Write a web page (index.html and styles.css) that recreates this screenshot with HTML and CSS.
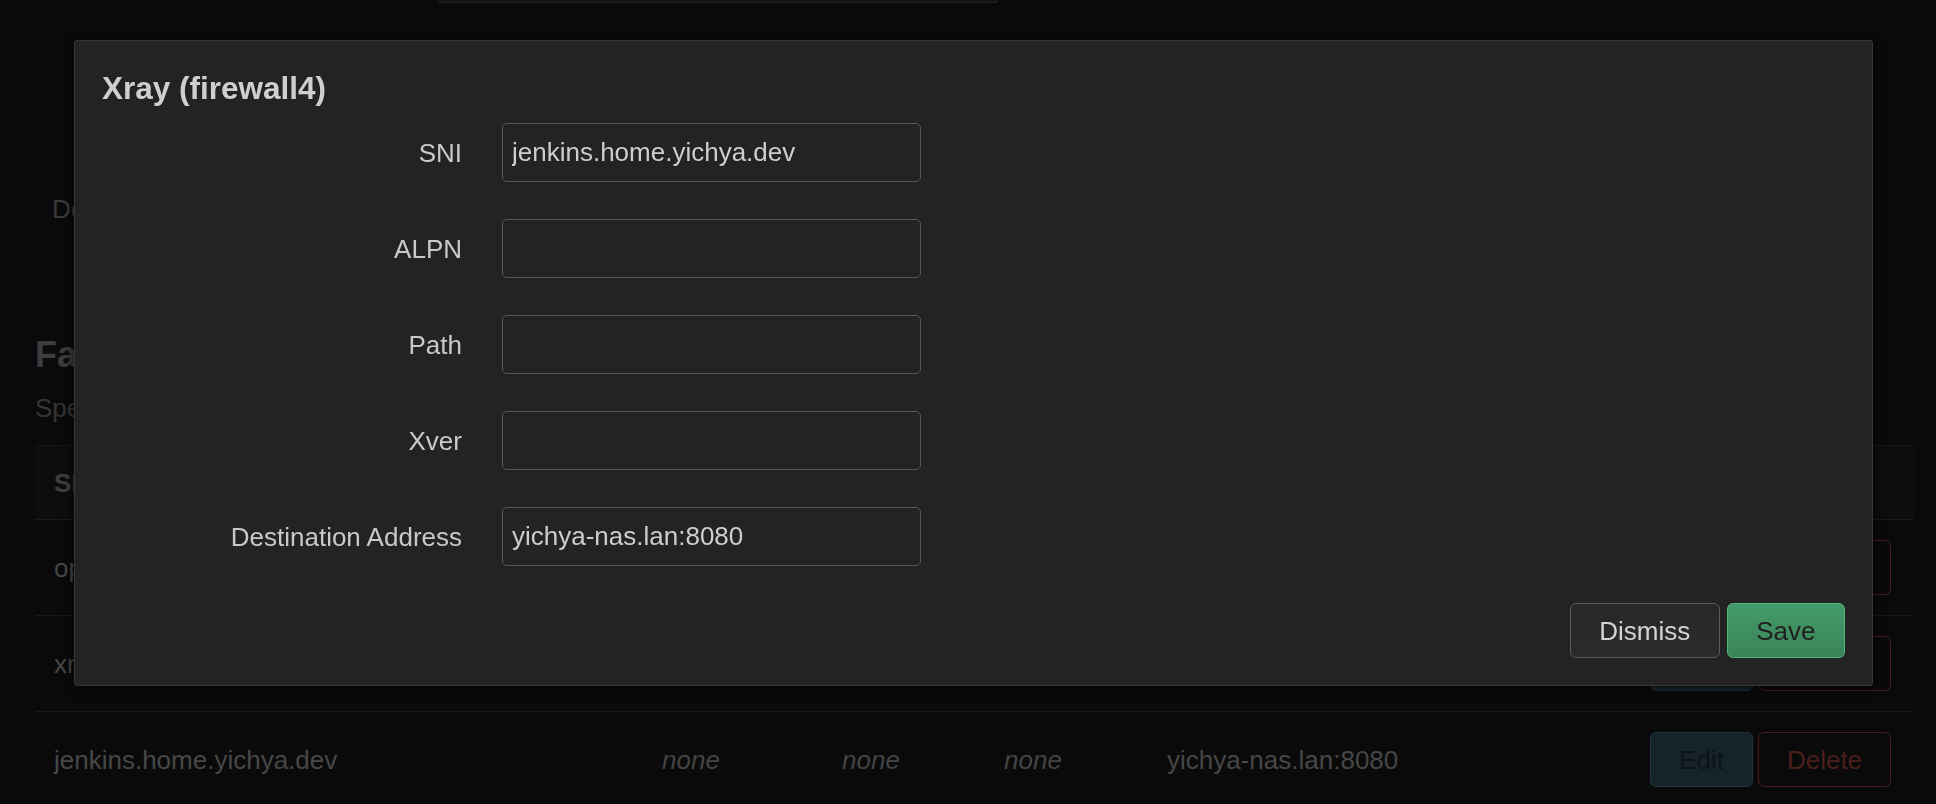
FILE: index.html
```html
<!DOCTYPE html>
<html lang="en">
<head>
<meta charset="utf-8">
<title>Xray (firewall4)</title>
<link rel="stylesheet" href="styles.css">
</head>
<body>
<div class="page">
  <div class="topstrip"></div>
  <div class="main">
    <div class="default-line">Default Fallback</div>
    <h3 class="section-title">Fallbacks</h3>
    <div class="section-desc">Specify fallback destinations for each SNI.</div>
    <div class="table">
      <div class="trow thead">
        <div class="cell">SNI</div>
        <div class="cell">ALPN</div>
        <div class="cell">Path</div>
        <div class="cell">Xver</div>
        <div class="cell">Destination Address</div>
        <div class="cell"></div>
      </div>
      <div class="trow">
        <div class="cell">openwrt.home.yichya.dev</div>
        <div class="cell em">none</div>
        <div class="cell em">none</div>
        <div class="cell em">none</div>
        <div class="cell">127.0.0.1:80</div>
        <div class="cell actions"><span class="btn-edit">Edit</span><span class="btn-del">Delete</span></div>
      </div>
      <div class="trow">
        <div class="cell">xray.home.yichya.dev</div>
        <div class="cell em">none</div>
        <div class="cell em">none</div>
        <div class="cell em">none</div>
        <div class="cell">127.0.0.1:8443</div>
        <div class="cell actions"><span class="btn-edit">Edit</span><span class="btn-del">Delete</span></div>
      </div>
      <div class="trow">
        <div class="cell">jenkins.home.yichya.dev</div>
        <div class="cell em">none</div>
        <div class="cell em">none</div>
        <div class="cell em">none</div>
        <div class="cell">yichya-nas.lan:8080</div>
        <div class="cell actions"><span class="btn-edit">Edit</span><span class="btn-del">Delete</span></div>
      </div>
    </div>
  </div>
</div>

<div class="overlay">
  <div class="modal">
    <h4 class="modal-title">Xray (firewall4)</h4>
    <div class="form">
      <div class="frow">
        <label class="flabel">SNI</label>
        <input class="finput" type="text" value="jenkins.home.yichya.dev">
      </div>
      <div class="frow">
        <label class="flabel">ALPN</label>
        <input class="finput" type="text" value="">
      </div>
      <div class="frow">
        <label class="flabel">Path</label>
        <input class="finput" type="text" value="">
      </div>
      <div class="frow">
        <label class="flabel">Xver</label>
        <input class="finput" type="text" value="">
      </div>
      <div class="frow">
        <label class="flabel">Destination Address</label>
        <input class="finput" type="text" value="yichya-nas.lan:8080">
      </div>
    </div>
    <div class="modal-actions">
      <button class="btn btn-dismiss">Dismiss</button>
      <button class="btn btn-save">Save</button>
    </div>
  </div>
</div>
</body>
</html>
```
FILE: styles.css
```css
* { box-sizing: border-box; }
html, body { margin: 0; padding: 0; }
body {
  background: #0a0a0a;
  font-family: "Liberation Sans", Arial, Helvetica, sans-serif;
  font-size: 26px;
  color: #474747;
  width: 1936px;
  height: 804px;
  overflow: hidden;
}
.page { width: 1936px; }
.topstrip {
  margin-left: 437px;
  width: 561px;
  height: 3px;
  background: #141414;
  border: 1px solid #202020;
  border-top: none;
  border-radius: 0 0 4px 4px;
}
.main { padding: 0 22px 0 35px; }
.default-line {
  margin: 191px 0 0 17px;
  line-height: 30px;
  color: #3b3b3b;
}
.section-title {
  margin: 110px 0 0 0;
  font-size: 36px;
  line-height: 42px;
  font-weight: bold;
  color: #3c3c3c;
}
.section-desc {
  margin-top: 17px;
  line-height: 30px;
  color: #353535;
}
.table { margin-top: 22px; }
.trow {
  display: grid;
  grid-template-columns: 608px 180px 162px 163px 1fr auto;
  align-items: center;
  height: 96px;
  border-top: 1px solid #1a1a1a;
}
.trow.thead {
  height: 74px;
  background: #0d0d0d;
  font-weight: bold;
  color: #3d3d3d;
  border-top: 1px solid #161616;
}
.cell { padding-left: 19px; line-height: 30px; white-space: nowrap; }
.cell.em { font-style: italic; color: #444; }
.actions {
  display: flex;
  gap: 5px;
  padding-right: 23px;
}
.btn-edit, .btn-del {
  display: inline-flex;
  align-items: center;
  height: 55px;
  border-radius: 6px;
  padding: 0 20px;
}
.btn-edit {
  width: 103px;
  justify-content: center;
  background: #162329;
  border: 1px solid #1f3440;
  color: #0c1418;
}
.btn-del {
  width: 133px;
  justify-content: center;
  border: 1px solid #4a1e1a;
  color: #4a1f1b;
}

/* modal */
.overlay {
  position: fixed;
  inset: 0;
}
.modal {
  margin: 40px 63px 0 74px;
  background: #232323;
  border: 1px solid #363636;
  border-radius: 3px;
  box-shadow: 0 2px 12px rgba(0, 0, 0, 0.7);
  padding: 29px 27px 27px 27px;
  color: #cbcbcb;
}
.modal-title {
  margin: 0 0 17px 0;
  font-size: 31.5px;
  line-height: 36px;
  font-weight: bold;
  color: #cfcfcf;
}
.form {
  display: flex;
  flex-direction: column;
  gap: 37px;
}
.frow {
  display: grid;
  grid-template-columns: 360px 419px;
  column-gap: 40px;
  align-items: center;
}
.flabel {
  text-align: right;
  line-height: 30px;
  color: #c9c9c9;
}
.finput {
  height: 59px;
  width: 419px;
  padding: 0 9px;
  background: #232323;
  border: 1px solid #595959;
  border-radius: 5px;
  font-family: inherit;
  font-size: 26px;
  color: #cdcdcd;
  outline: none;
}
.modal-actions {
  display: flex;
  justify-content: flex-end;
  gap: 7px;
  margin-top: 37px;
}
.btn {
  height: 55px;
  padding: 0 28.5px;
  border-radius: 6px;
  font-family: inherit;
  font-size: 26px;
  line-height: 30px;
}
.btn-dismiss {
  background: linear-gradient(#282828, #2b2b2b);
  border: 1px solid #5b5b5b;
  color: #d4d4d4;
}
.btn-save {
  background: linear-gradient(#449a69, #3a8458);
  border: 1px solid #51b57c;
  color: #202020;
}
```
